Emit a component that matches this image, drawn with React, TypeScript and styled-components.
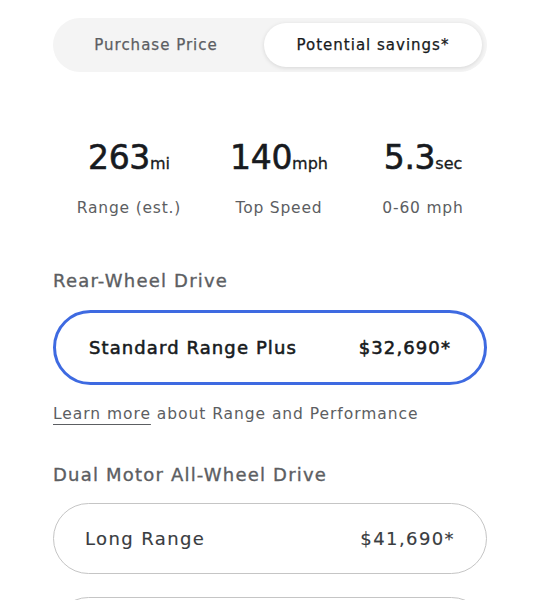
import React from 'react';
import styled, { createGlobalStyle } from 'styled-components';

const GlobalStyle = createGlobalStyle`
  html, body {
    margin: 0;
    padding: 0;
    background: #ffffff;
  }
  body {
    font-family: 'DejaVu Sans', 'Open Sans', sans-serif;
    color: #171a20;
  }
`;

const Page = styled.div`
  width: 434px;
  padding: 18px 0 0 53px;
`;

const Toggle = styled.div`
  display: grid;
  grid-template-columns: 1fr 218px;
  height: 54px;
  padding: 5px;
  box-sizing: border-box;
  border-radius: 27px;
  background: #f4f4f4;
`;

const ToggleOption = styled.div<{ $active?: boolean }>`
  display: flex;
  align-items: center;
  justify-content: center;
  padding-right: ${(p) => (p.$active ? '0' : '10px')};
  border-radius: 22px;
  font-size: 15px;
  letter-spacing: 1px;
  -webkit-text-stroke: 0.25px currentColor;
  color: ${(p) => (p.$active ? '#171a20' : '#5c5e62')};
  background: ${(p) => (p.$active ? '#ffffff' : 'transparent')};
  box-shadow: ${(p) => (p.$active ? '0 1px 4px rgba(0, 0, 0, 0.12)' : 'none')};
`;

const Stats = styled.div`
  display: grid;
  grid-template-columns: 152px 148px 140px;
  margin-top: 66px;
`;

const Stat = styled.div`
  display: flex;
  flex-direction: column;
  align-items: center;
`;

const StatValue = styled.div`
  font-size: 33px;
  line-height: 40px;
  letter-spacing: -0.3px;
  -webkit-text-stroke: 0.6px currentColor;
`;

const StatUnit = styled.span`
  font-size: 16px;
  letter-spacing: 0;
  -webkit-text-stroke: 0.3px currentColor;
`;

const StatLabel = styled.div`
  margin-top: 15px;
  font-size: 15.5px;
  letter-spacing: 0.8px;
  color: #5c5e62;
`;

const SectionTitle = styled.h3`
  margin: 0;
  font-size: 18px;
  font-weight: 400;
  line-height: 24px;
  letter-spacing: 1.2px;
  -webkit-text-stroke: 0.35px currentColor;
  color: #5c5e62;
`;

const TrimCard = styled.div<{ $selected?: boolean }>`
  display: flex;
  align-items: center;
  justify-content: space-between;
  margin-top: ${(p) => (p.$selected ? '17px' : '16px')};
  height: ${(p) => (p.$selected ? '75px' : '71px')};
  padding: 0 ${(p) => (p.$selected ? '33px' : '31px')};
  box-sizing: border-box;
  border-radius: 38px;
  border: ${(p) => (p.$selected ? '3px solid #3e6ae1' : '1px solid #c5c5c5')};
  font-size: 18px;
  letter-spacing: ${(p) => (p.$selected ? '1.1px' : '1.4px')};
  -webkit-text-stroke: ${(p) => (p.$selected ? '0.55px' : '0.15px')} currentColor;
  color: ${(p) => (p.$selected ? '#171a20' : '#393c41')};

  & + & {
    margin-top: 23px;
  }
`;

const Note = styled.p`
  margin: 19px 0 0;
  font-size: 15.5px;
  line-height: 20px;
  letter-spacing: 0.95px;
  color: #5c5e62;
`;

const Link = styled.a`
  color: #5c5e62;
  text-decoration: underline;
  text-decoration-thickness: 1px;
  text-underline-offset: 5px;
`;

const Section = styled.section<{ $gap: number }>`
  margin-top: ${(p) => p.$gap}px;
`;

const stats = [
  { value: '263', unit: 'mi', label: 'Range (est.)' },
  { value: '140', unit: 'mph', label: 'Top Speed' },
  { value: '5.3', unit: 'sec', label: '0-60 mph' },
];

export default function App() {
  return (
    <>
      <GlobalStyle />
      <Page>
        <Toggle>
          <ToggleOption>Purchase Price</ToggleOption>
          <ToggleOption $active>Potential savings*</ToggleOption>
        </Toggle>

        <Stats>
          {stats.map((s) => (
            <Stat key={s.label}>
              <StatValue>
                {s.value}
                <StatUnit>{s.unit}</StatUnit>
              </StatValue>
              <StatLabel>{s.label}</StatLabel>
            </Stat>
          ))}
        </Stats>

        <Section $gap={52}>
          <SectionTitle>Rear-Wheel Drive</SectionTitle>
          <TrimCard $selected>
            <span>Standard Range Plus</span>
            <span>$32,690*</span>
          </TrimCard>
          <Note>
            <Link>Learn more</Link> about Range and Performance
          </Note>
        </Section>

        <Section $gap={39}>
          <SectionTitle>Dual Motor All-Wheel Drive</SectionTitle>
          <TrimCard>
            <span>Long Range</span>
            <span>$41,690*</span>
          </TrimCard>
          <TrimCard />
        </Section>
      </Page>
    </>
  );
}
